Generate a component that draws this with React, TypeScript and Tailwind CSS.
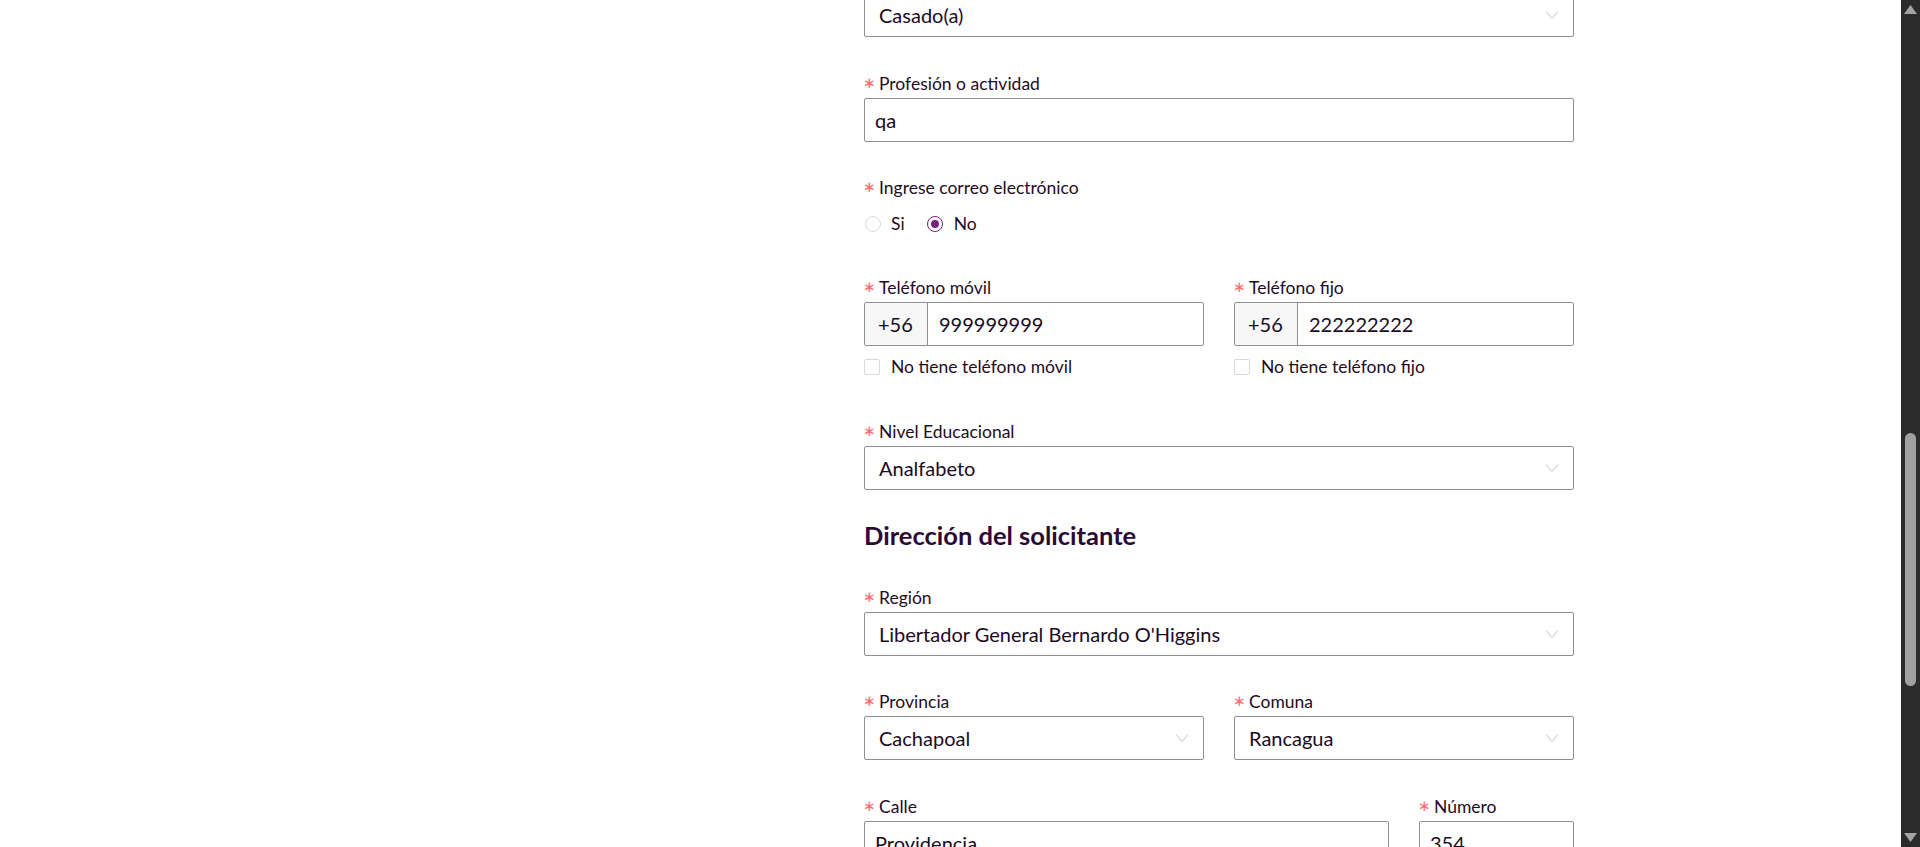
import React from "react";

function Chevron() {
  return (
    <svg className="w-[14px] h-[8px] text-[#c4c4c4]" viewBox="0 0 14 8" fill="none" stroke="currentColor" strokeWidth={1}>
      <polyline points="1,0.5 7,7.5 13,0.5" />
    </svg>
  );
}

function Label({ text }: { text: string }) {
  return (
    <div className="flex items-center h-[24px] pt-[2px] mb-[3px] text-[17.5px] leading-[24px] text-[#1f0c25]">
      <span className="text-[#ff6b6e] text-[15px] leading-[15px] mr-[3px] -ml-[1px] -translate-y-[2px]">∗</span>
      {text}
    </div>
  );
}

function Select({ value }: { value: string }) {
  return (
    <div className="flex items-center justify-between h-[44px] border border-[#8f8f8f] rounded-[2px] pl-[14px] pr-[14px] bg-white">
      <span className="text-[20px] text-[#1a0a1f]">{value}</span>
      <Chevron />
    </div>
  );
}

function TextInput({ value }: { value: string }) {
  return (
    <div className="flex items-center h-[44px] border border-[#8f8f8f] rounded-[2px] px-[10px] bg-white overflow-hidden">
      <span className="text-[20px] leading-[24px] text-[#1a0a1f]">{value}</span>
    </div>
  );
}

function PhoneInput({ value }: { value: string }) {
  return (
    <div className="flex h-[44px] border border-[#8f8f8f] rounded-[2px] overflow-hidden">
      <div className="flex items-center w-[63px] px-[13px] bg-[#f7f7f7] border-r border-[#8f8f8f] text-[20px] text-[#1a0a1f]">+56</div>
      <div className="flex items-center px-[11px] text-[20px] text-[#1a0a1f]">{value}</div>
    </div>
  );
}

function Check({ text }: { text: string }) {
  return (
    <div className="flex items-center h-[24px] mt-[9px] text-[17.5px] text-[#1f0c25]">
      <span className="w-[16px] h-[16px] border border-[#d9d9d9] rounded-[2px] bg-white mr-[11px]" />
      {text}
    </div>
  );
}

export default function App() {
  return (
    <div className="flex h-screen overflow-hidden bg-white font-['Lato',sans-serif]">
      <div className="flex-1 overflow-hidden">
        <div className="ml-[864px] w-[710px] -mt-[7px]">
          <Select value="Casado(a)" />

          <div className="mt-[34px]">
            <Label text="Profesión o actividad" />
            <TextInput value="qa" />
          </div>

          <div className="mt-[33px]">
            <Label text="Ingrese correo electrónico" />
            <div className="flex items-center h-[24px] mt-[13px] text-[17.5px] text-[#1f0c25]">
              <span className="w-[16px] h-[16px] rounded-full border border-[#d9d9d9] bg-white mr-[10px] ml-[1px]" />
              <span className="mr-[22px]">Si</span>
              <span className="flex items-center justify-center w-[16px] h-[16px] rounded-full border border-[#7a1f82] bg-white mr-[11px]">
                <span className="w-[8px] h-[8px] rounded-full bg-[#7a1f82]" />
              </span>
              <span>No</span>
            </div>
          </div>

          <div className="grid grid-cols-2 gap-[30px] mt-[39px]">
            <div>
              <Label text="Teléfono móvil" />
              <PhoneInput value="999999999" />
              <Check text="No tiene teléfono móvil" />
            </div>
            <div>
              <Label text="Teléfono fijo" />
              <PhoneInput value="222222222" />
              <Check text="No tiene teléfono fijo" />
            </div>
          </div>

          <div className="mt-[40px]">
            <Label text="Nivel Educacional" />
            <Select value="Analfabeto" />
          </div>

          <h2 className="mt-[29px] text-[25.5px] leading-[32px] font-bold text-[#2a0a33]">Dirección del solicitante</h2>

          <div className="mt-[34px]">
            <Label text="Región" />
            <Select value="Libertador General Bernardo O'Higgins" />
          </div>

          <div className="grid grid-cols-2 gap-[30px] mt-[33px]">
            <div>
              <Label text="Provincia" />
              <Select value="Cachapoal" />
            </div>
            <div>
              <Label text="Comuna" />
              <Select value="Rancagua" />
            </div>
          </div>

          <div className="grid grid-cols-[525px_155px] gap-[30px] mt-[34px]">
            <div>
              <Label text="Calle" />
              <TextInput value="Providencia" />
            </div>
            <div>
              <Label text="Número" />
              <TextInput value="354" />
            </div>
          </div>
        </div>
      </div>

      {/* scrollbar */}
      <div className="flex flex-col items-center w-[19px] h-full bg-[#2b2b2b]">
        <div className="flex items-center justify-center h-[19px] w-full">
          <svg width="13" height="9" viewBox="0 0 13 9"><polygon points="6.5,0 13,9 0,9" fill="#a3a3a3" /></svg>
        </div>
        <div className="h-[414px]" />
        <div className="w-[11px] h-[253px] rounded-full bg-[#a0a0a0]" />
        <div className="flex-1" />
        <div className="flex items-center justify-center h-[19px] w-full">
          <svg width="13" height="9" viewBox="0 0 13 9"><polygon points="0,0 13,0 6.5,9" fill="#a3a3a3" /></svg>
        </div>
      </div>
    </div>
  );
}
